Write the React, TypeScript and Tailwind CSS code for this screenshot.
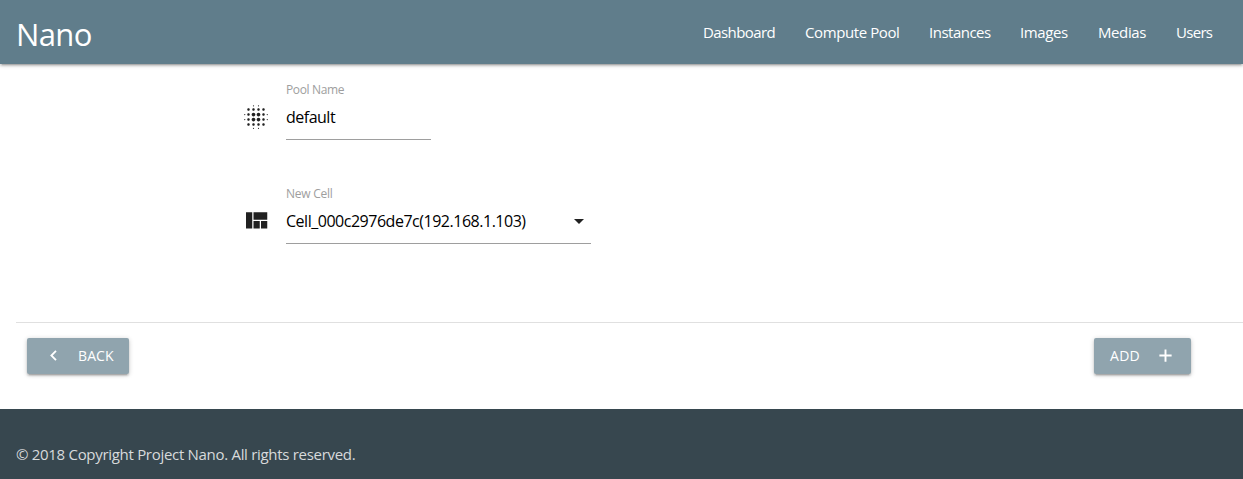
import { MdArrowDropDown, MdBlurOn } from "react-icons/md";

const links = [
  { label: "Dashboard", style: "w-[102px] tracking-[-0.6px]" },
  { label: "Compute Pool", style: "w-[124px] tracking-[-0.4px]" },
  { label: "Instances", style: "w-[91px] tracking-[-0.5px]" },
  { label: "Images", style: "w-[78px] tracking-[-0.4px]" },
  { label: "Medias", style: "w-[78px] tracking-[-0.4px]" },
  { label: "Users", style: "w-[66px] tracking-[-0.7px]" },
];

const raised = "flex h-9 items-center rounded-[2px] bg-[#90a4ae] text-[14px] text-white shadow-[0_2px_2px_0_rgba(0,0,0,0.14),0_3px_1px_-2px_rgba(0,0,0,0.12),0_1px_5px_0_rgba(0,0,0,0.2)]";

const icons = {
  quilt: "M10 18h5v-6h-5v6zm-6 0h5V5H4v13zm12 0h5v-6h-5v6zM10 5v6h11V5H10z",
  back: "M15.6 7.5 14.1 6l-6 6 6 6 1.5-1.5-4.5-4.5z",
  add: "M19 13.1h-5.9V19h-2.2v-5.9H5v-2.2h5.9V5h2.2v5.9H19z",
};

function Icon({ name, className }: { name: keyof typeof icons; className: string }) {
  return (
    <svg viewBox="0 0 24 24" fill="currentColor" className={className}>
      <path d={icons[name]} />
    </svg>
  );
}

export default function App() {
  return (
    <div className="flex h-[479px] flex-col overflow-hidden bg-white font-['Open_Sans','Noto_Sans',sans-serif] whitespace-nowrap">
      <nav className="relative flex h-16 shrink-0 items-center justify-between bg-[#607d8b] pr-4 pl-4 text-white shadow-[0_2px_2px_0_rgba(0,0,0,0.14),0_3px_1px_-2px_rgba(0,0,0,0.12),0_1px_5px_0_rgba(0,0,0,0.2)]">
        <a className="pt-1 text-[31px] leading-[60px] tracking-[-0.6px]">Nano</a>
        <ul className="flex text-[15px] leading-[64px]">
          {links.map((l) => (
            <li key={l.label} className={`pl-[15px] ${l.style}`}>{l.label}</li>
          ))}
        </ul>
      </nav>

      <main className="flex h-[345px] shrink-0 flex-col pl-4">
        <div className="flex h-[104px] pt-[18px] pl-[225px]">
          <MdBlurOn className="mt-5 size-[30px] shrink-0 text-[#212121]" />
          <label className="ml-[15px] flex h-[58px] w-[145px] flex-col border-b border-[#9e9e9e]">
            <span className="h-4 text-[12px] leading-4 tracking-[-0.35px] text-[#9e9e9e]">Pool Name</span>
            <span className="pt-1.5 text-[16px] leading-[26px] tracking-[-0.5px] text-black">default</span>
          </label>
        </div>
        <div className="flex h-[154px] pt-[18px] pl-[225px]">
          <Icon name="quilt" className="mt-5 size-[30px] shrink-0 text-[#212121]" />
          <label className="ml-[15px] flex h-[58px] w-[305px] flex-col border-b border-[#9e9e9e]">
            <span className="h-4 text-[12px] leading-4 tracking-[-0.25px] text-[#9e9e9e]">New Cell</span>
            <span className="flex items-center justify-between pt-1.5 text-[16px] leading-[26px] tracking-[-0.48px] text-black">
              Cell_000c2976de7c(192.168.1.103)
              <MdArrowDropDown className="size-6 text-[#212121]" />
            </span>
          </label>
        </div>
        <div className="flex items-start justify-between border-t border-[#e0e0e0] pt-[15px] pr-[52px] pl-[11px]">
          <button className={`${raised} w-[102px] pb-px pl-4`}>
            <Icon name="back" className="size-[21px]" />
            <span className="ml-[14px] tracking-[0.1px]">BACK</span>
          </button>
          <button className={`${raised} w-[97px] pb-px pl-4`}>
            <span className="w-[45px] text-left tracking-[0.3px]">ADD</span>
            <Icon name="add" className="size-[21px]" />
          </button>
        </div>
      </main>

      <footer className="h-[70px] shrink-0 bg-[#37474f] pt-[34px] pl-4 text-[15px] leading-[22px] tracking-[-0.3px] text-[#d7dadc]">
        © 2018 Copyright Project Nano. All rights reserved.
      </footer>
    </div>
  );
}
